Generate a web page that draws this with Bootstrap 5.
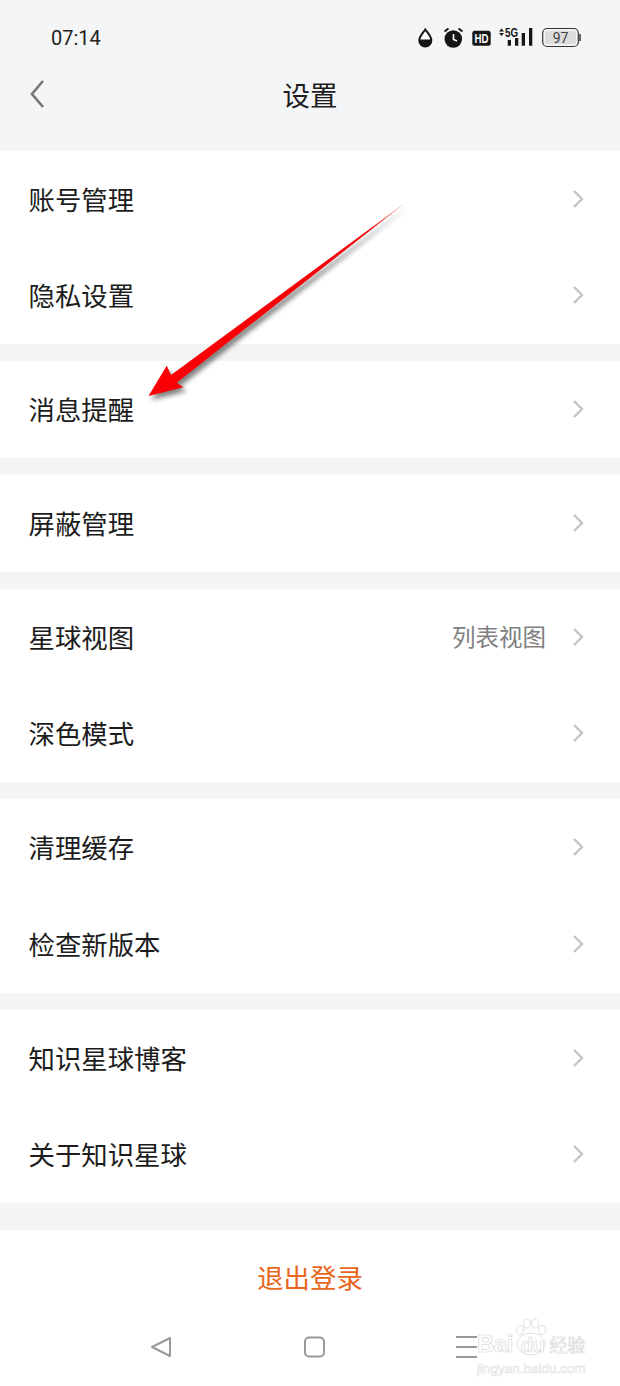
<!DOCTYPE html>
<html lang="zh-CN">
<head>
  <meta charset="UTF-8" />
  <title>设置</title>
  <meta name="viewport" content="width=device-width, initial-scale=1" />
  <link href="https://cdn.jsdelivr.net/npm/bootstrap@5.3.0/dist/css/bootstrap.min.css" rel="stylesheet" />
  <style>
    body {
      background: #f4f5f7;
      color: #1c1c1c;
      font-family: "Noto Sans CJK SC", "Liberation Sans", sans-serif;
      width: 620px;
      height: 1386px;
      overflow: hidden;
      position: relative;
    }
    .status-row { height: 60px; padding: 25px 38px 0 51px; }
    .status-time { font: 400 20px/26px Roboto, sans-serif; color: #222; }
    .status-icons { margin-top: 1px; }
    .title-row { height: 91px; position: relative; }
    .title-text { font-size: 27.500px; line-height: 69px; color: #1c1c1c; display: block; }
    .back-icon { position: absolute; left: 29px; top: 19px; }
    .set-group { background: #fff; margin-bottom: 17px; }
    .set-group.group-last { margin-bottom: 27px; }
    .set-row { height: 96.500px; padding: 0 36px 1px 28.500px; font-size: 26.400px; }
    .set-row:only-child, .group-tall .set-row { height: 97px; }
    .set-value { font-size: 23.500px; color: #808080; margin-right: 26px; }
    .logout-area { background: #fff; height: 156px; }
    .logout-text { color: #e8651c; font-size: 26.400px; line-height: 94px; margin-bottom: 5px; }
    .nav-keys { height: 36px; }
    .key-back { margin-left: 150px; }
    .key-home { margin-left: 131px; }
    .key-menu { margin-left: 130px; }
    .pointer-arrow { position: absolute; left: 0; top: 0; }
    .mark-wrap { position: absolute; left: 477px; top: 1328px; width: 110px; }
    .mark-line { color: #fff; -webkit-text-stroke: 0.7px #dadada; font: 700 24px/32px "Liberation Sans", sans-serif; white-space: nowrap; letter-spacing: -0.500px; }
    .mark-du { font-size: 20px; margin-left: 8px; }
    .mark-cn { font: 400 18px/32px "Noto Sans CJK SC", sans-serif; margin-left: 5px; letter-spacing: 0; }
    .mark-url { color: #fff; -webkit-text-stroke: 0.5px #dcdcdc; font: 400 13.500px/16px "Liberation Sans", sans-serif; white-space: nowrap; }
    .mark-paw { position: absolute; left: 513px; top: 1318px; }
  </style>
</head>
<body>
  <!-- status bar -->
  <div class="status-row d-flex justify-content-between">
    <span class="status-time">07:14</span>
    <svg class="status-icons" width="166" height="24" viewBox="0 0 166 24">
      <!-- water drop -->
      <path d="M9.300 3.500 C6.500 7.500 3.300 10 3.300 14.500 a6 6 0 0 0 12 0 C15.300 10 12 7.500 9.300 3.500Z" fill="#fff" stroke="#161616" stroke-width="2"/>
      <path d="M3.300 13.500 h12 v1 a6 6 0 0 1 -12 0Z" fill="#161616"/>
      <!-- alarm -->
      <circle cx="37.300" cy="13" r="8.800" fill="#161616"/>
      <path d="M37.500 8v5.500l3.500 1.500" stroke="#fff" stroke-width="1.600" fill="none"/>
      <path d="M28.500 5.500l4-3M46.500 5.500l-4-3" stroke="#161616" stroke-width="2"/>
      <!-- HD -->
      <rect x="56.300" y="4.700" width="18.400" height="15" rx="2.500" fill="#161616"/>
      <text x="65.500" y="16.700" text-anchor="middle" font-family="Liberation Sans" font-weight="700" font-size="12" fill="#fff" textLength="14" lengthAdjust="spacingAndGlyphs">HD</text>
      <!-- signal -->
      <path d="M83 5.500l2.500-3 2.500 3zM83 7l2.500 3 2.500-3z" fill="#161616"/>
      <text x="89" y="11" font-family="Liberation Sans" font-weight="700" font-size="12" fill="#161616" textLength="13" lengthAdjust="spacingAndGlyphs">5G</text>
      <rect x="91.700" y="14" width="3.300" height="5.700" fill="#161616"/>
      <rect x="99" y="12" width="3.300" height="7.700" fill="#161616"/>
      <rect x="105.700" y="7" width="3.300" height="12.700" fill="#161616"/>
      <rect x="113" y="2" width="3.300" height="17.700" fill="#161616"/>
      <!-- battery -->
      <rect x="126.700" y="2.500" width="35.600" height="18" rx="4.500" fill="none" stroke="#333" stroke-width="1.200"/>
      <rect x="129" y="4.700" width="31" height="13.500" rx="2.500" fill="#dcdcdc"/>
      <rect x="163" y="8" width="2" height="7" fill="#666"/>
      <text x="144.500" y="16.500" text-anchor="middle" font-family="Roboto" font-size="14" fill="#444">97</text>
    </svg>
  </div>

  <!-- title bar -->
  <div class="title-row text-center">
    <svg class="back-icon" width="16" height="30" viewBox="0 0 16 30">
      <path d="M14 2 L3 15 L14 28" fill="none" stroke="#777" stroke-width="2.600"/>
    </svg>
    <span class="title-text">设置</span>
  </div>

  <div class="set-group">
    <div class="set-row d-flex align-items-center"><span class="flex-grow-1">账号管理</span><svg width="12" height="20" viewBox="0 0 12 20"><path d="M2 2l8 8-8 8" fill="none" stroke="#c4c4c4" stroke-width="2.400"/></svg></div>
    <div class="set-row d-flex align-items-center"><span class="flex-grow-1">隐私设置</span><svg width="12" height="20" viewBox="0 0 12 20"><path d="M2 2l8 8-8 8" fill="none" stroke="#c4c4c4" stroke-width="2.400"/></svg></div>
  </div>
  <div class="set-group">
    <div class="set-row d-flex align-items-center"><span class="flex-grow-1">消息提醒</span><svg width="12" height="20" viewBox="0 0 12 20"><path d="M2 2l8 8-8 8" fill="none" stroke="#c4c4c4" stroke-width="2.400"/></svg></div>
  </div>
  <div class="set-group">
    <div class="set-row d-flex align-items-center"><span class="flex-grow-1">屏蔽管理</span><svg width="12" height="20" viewBox="0 0 12 20"><path d="M2 2l8 8-8 8" fill="none" stroke="#c4c4c4" stroke-width="2.400"/></svg></div>
  </div>
  <div class="set-group">
    <div class="set-row d-flex align-items-center"><span class="flex-grow-1">星球视图</span><span class="set-value">列表视图</span><svg width="12" height="20" viewBox="0 0 12 20"><path d="M2 2l8 8-8 8" fill="none" stroke="#c4c4c4" stroke-width="2.400"/></svg></div>
    <div class="set-row d-flex align-items-center"><span class="flex-grow-1">深色模式</span><svg width="12" height="20" viewBox="0 0 12 20"><path d="M2 2l8 8-8 8" fill="none" stroke="#c4c4c4" stroke-width="2.400"/></svg></div>
  </div>
  <div class="set-group group-tall">
    <div class="set-row d-flex align-items-center"><span class="flex-grow-1">清理缓存</span><svg width="12" height="20" viewBox="0 0 12 20"><path d="M2 2l8 8-8 8" fill="none" stroke="#c4c4c4" stroke-width="2.400"/></svg></div>
    <div class="set-row d-flex align-items-center"><span class="flex-grow-1">检查新版本</span><svg width="12" height="20" viewBox="0 0 12 20"><path d="M2 2l8 8-8 8" fill="none" stroke="#c4c4c4" stroke-width="2.400"/></svg></div>
  </div>
  <div class="set-group group-last">
    <div class="set-row d-flex align-items-center"><span class="flex-grow-1">知识星球博客</span><svg width="12" height="20" viewBox="0 0 12 20"><path d="M2 2l8 8-8 8" fill="none" stroke="#c4c4c4" stroke-width="2.400"/></svg></div>
    <div class="set-row d-flex align-items-center"><span class="flex-grow-1">关于知识星球</span><svg width="12" height="20" viewBox="0 0 12 20"><path d="M2 2l8 8-8 8" fill="none" stroke="#c4c4c4" stroke-width="2.400"/></svg></div>
  </div>

  <div class="logout-area">
    <div class="logout-text text-center">退出登录</div>
    <div class="nav-keys d-flex align-items-center">
      <svg class="key-back" width="22" height="22" viewBox="0 0 22 22"><path d="M2 11 L20 2 V20Z" fill="none" stroke="#999" stroke-width="2" stroke-linejoin="round"/></svg>
      <svg class="key-home" width="22" height="22" viewBox="0 0 22 22"><rect x="2" y="1.500" width="19" height="19" rx="4" fill="none" stroke="#999" stroke-width="2"/></svg>
      <svg class="key-menu" width="22" height="22" viewBox="0 0 22 22"><path d="M1 1h21M1 11h21M1 21h21" stroke="#999" stroke-width="2"/></svg>
    </div>
  </div>

  <!-- watermark -->
  <svg class="mark-paw" width="36" height="40" viewBox="0 0 36 40">
    <g fill="#fff" stroke="#e0e0e0" stroke-width="1">
      <ellipse cx="7" cy="12" rx="3.500" ry="4.500"/>
      <ellipse cx="14" cy="5.500" rx="3.500" ry="4.500"/>
      <ellipse cx="22" cy="5.500" rx="3.500" ry="4.500"/>
      <ellipse cx="29" cy="12" rx="3.500" ry="4.500"/>
      <ellipse cx="18" cy="26" rx="14" ry="11"/>
    </g>
  </svg>
  <div class="mark-wrap">
    <div class="mark-line">Bai<span class="mark-du">du</span><span class="mark-cn">经验</span></div>
    <div class="mark-url">jingyan.baidu.com</div>
  </div>

  <!-- red annotation arrow -->
  <svg class="pointer-arrow" width="620" height="1386" viewBox="0 0 620 1386">
    <defs>
      <linearGradient id="arrowFill" x1="150" y1="396" x2="407" y2="201" gradientUnits="userSpaceOnUse">
        <stop offset="0" stop-color="#fb0006"/>
        <stop offset="0.85" stop-color="#f2040a"/>
        <stop offset="1" stop-color="#f09090"/>
      </linearGradient>
      <filter id="arrowShadow" x="-20%" y="-20%" width="140%" height="140%">
        <feGaussianBlur stdDeviation="2.500"/>
      </filter>
    </defs>
    <path d="M148.500 396 L166.700 365.700 L171 375 L407 201.500 L176.700 382.700 L183.300 387.300Z" transform="translate(3 4)" fill="#000" opacity="0.5" filter="url(#arrowShadow)"/>
    <path d="M148.500 396 L166.700 365.700 L171 375 L407 201.500 L176.700 382.700 L183.300 387.300Z" fill="url(#arrowFill)"/>
  </svg>
  <script src="https://cdn.jsdelivr.net/npm/bootstrap@5.3.0/dist/js/bootstrap.bundle.min.js"></script>
</body>
</html>
